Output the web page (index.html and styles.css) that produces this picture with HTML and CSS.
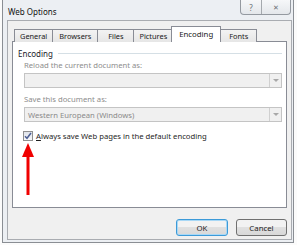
FILE: index.html
```html
<!DOCTYPE html>
<html lang="en">
<head>
  <meta charset="UTF-8" />
  <title>Web Options</title>
  <link rel="stylesheet" href="styles.css">
</head>
<body>
  <div class="window">
    <div class="titlebar">
      <span class="title">Web Options</span>
      <div class="caption-btns">
        <span class="cap help">?</span>
        <span class="cap close">&#x2715;</span>
      </div>
    </div>

    <div class="client">
      <!-- tabs -->
      <div class="tabs">
        <span class="tab">General</span>
        <span class="tab">Browsers</span>
        <span class="tab">Files</span>
        <span class="tab">Pictures</span>
        <span class="tab active">Encoding</span>
        <span class="tab">Fonts</span>
      </div>

      <div class="panel">
        <div class="group-title"><span>Encoding</span><i class="rule"></i></div>

        <div class="field first">
          <div class="label">Reload the current document as:</div>
          <div class="combo"><span class="value"></span><b class="drop"></b></div>
        </div>

        <div class="field">
          <div class="label">Save this document as:</div>
          <div class="combo"><span class="value">Western European (Windows)</span><b class="drop"></b></div>
        </div>

        <label class="check">
          <span class="box">
            <svg width="8" height="8" viewBox="0 0 8 8"><path d="M1 4.2 L3 6.3 L7 1" fill="none" stroke="#4d5f94" stroke-width="1.5"/></svg>
          </span>
          <span><u>A</u>lways save Web pages in the default encoding</span>
        </label>

        <!-- red pointer drawn over the panel -->
        <svg class="pointer" width="14" height="54" viewBox="0 0 14 54">
          <polygon points="7,0 1,14 13,14" fill="#f00000"/>
          <rect x="5.5" y="13" width="3" height="39" fill="#f00000"/>
        </svg>
      </div>

      <div class="buttons">
        <button class="btn default">OK</button>
        <button class="btn">Cancel</button>
      </div>
    </div>
  </div>
</body>
</html>
```

FILE: styles.css
```css
body {
  margin: 0;
  width: 297px;
  height: 245px;
  overflow: hidden;
  background: #fbfbfb;
  font-family: "Noto Sans", "Liberation Sans", sans-serif;
  font-size: 7.7px;
  color: #1e1e1e;
}

.window {
  position: relative;
  margin-left: 2px;
  width: 292px;
  height: 243px;
  box-sizing: border-box;
  border: 1px solid #8a8e94;
  border-top: none;
  background: #eceff3;
  padding: 0 1px 2px 4px;
  display: flex;
  flex-direction: column;
}

.titlebar {
  height: 20px;
  display: flex;
  align-items: flex-start;
}

.title {
  margin-top: 6px;
  margin-left: 1px;
  font-size: 8px;
  color: #111;
}

.caption-btns {
  margin-left: auto;
  margin-right: 1px;
  display: flex;
  height: 14px;
  border: 1px solid #9499a0;
  border-top: none;
  border-radius: 0 0 4px 4px;
  background: linear-gradient(#f6f7f9, #e4e7eb);
  overflow: hidden;
}

.cap {
  display: flex;
  align-items: center;
  justify-content: center;
  color: #6b6f75;
  font-size: 8px;
}

.help {
  width: 20px;
  border-right: 1px solid #a5a9ae;
}

.close {
  width: 28px;
  font-size: 7px;
}

.client {
  flex: 1;
  background: #f0f0f0;
  border: 1px solid #a9acb1;
  display: flex;
  flex-direction: column;
  padding: 0 4px 3px 4px;
}

.tabs {
  height: 21px;
  display: flex;
  align-items: flex-end;
  padding-left: 2px;
  margin-bottom: -1px;
  position: relative;
  z-index: 1;
}

.tab {
  height: 12px;
  line-height: 12px;
  min-width: 25px;
  text-align: center;
  padding: 0 5px;
  border: 1px solid #898c95;
  border-right: none;
  border-bottom: none;
  background: linear-gradient(#f3f3f3, #e6e6e6);
  color: #202020;
  font-size: 7.4px;
}

.tab:nth-child(2) {
  padding: 0 6px;
}

.tab:nth-child(6) {
  border-right: 1px solid #898c95;
}

.tab.active {
  height: 15px;
  line-height: 14px;
  background: #fff;
  border-right: 1px solid #898c95;
  margin-left: -1px;
  margin-right: -1px;
  padding: 0 7px;
  position: relative;
  z-index: 2;
  font-size: 7.8px;
}

.panel {
  position: relative;
  height: 167px;
  box-sizing: border-box;
  background: #fff;
  border: 1px solid #898c95;
  padding: 5px 4px 0 5px;
}

.group-title {
  display: flex;
  align-items: center;
  gap: 5px;
  height: 12px;
  font-size: 8px;
  color: #1b1b2b;
}

.rule {
  flex: 1;
  height: 1px;
  background: #d5dfe5;
}

.field {
  margin-left: 6px;
  margin-top: 6px;
}

.field.first {
  margin-top: 1px;
}

.label {
  color: #8d8d8d;
  height: 10px;
  line-height: 10px;
  margin-bottom: 3px;
}

.combo {
  height: 15px;
  box-sizing: border-box;
  border: 1px solid #c4c4c4;
  background: #f0f0f0;
  display: flex;
  align-items: center;
}

.value {
  flex: 1;
  padding-left: 3px;
  color: #8a8a8a;
}

.drop {
  width: 11px;
  height: 100%;
  border-left: 1px solid #d0d0d0;
  display: flex;
  align-items: center;
  justify-content: center;
}

.drop::after {
  content: "";
  border-left: 3px solid transparent;
  border-right: 3px solid transparent;
  border-top: 3px solid #a8a8a8;
}

.check {
  display: flex;
  align-items: center;
  gap: 3px;
  margin-top: 9px;
  margin-left: 5px;
  height: 10px;
  color: #1e1e1e;
}

.box {
  width: 10px;
  height: 10px;
  box-sizing: border-box;
  border: 1px solid #8f8f8f;
  background: linear-gradient(#dfe3ea, #f7f8fa);
  display: flex;
  align-items: center;
  justify-content: center;
}

.pointer {
  position: absolute;
  left: 8px;
  top: 101px;
}

.buttons {
  display: flex;
  justify-content: flex-end;
  gap: 8px;
  margin-top: 11px;
}

.btn {
  height: 17px;
  width: 51px;
  padding: 0;
  border: 1px solid #707070;
  border-radius: 3px;
  background: linear-gradient(#f2f2f2 50%, #e0e0e0 50%, #d8d8d8);
  font-family: inherit;
  font-size: 7.8px;
  color: #1e1e1e;
}

.btn.default {
  width: 52px;
  border-color: #3c9ad8;
  box-shadow: inset 0 0 0 1px #a8d8f6;
}
```
